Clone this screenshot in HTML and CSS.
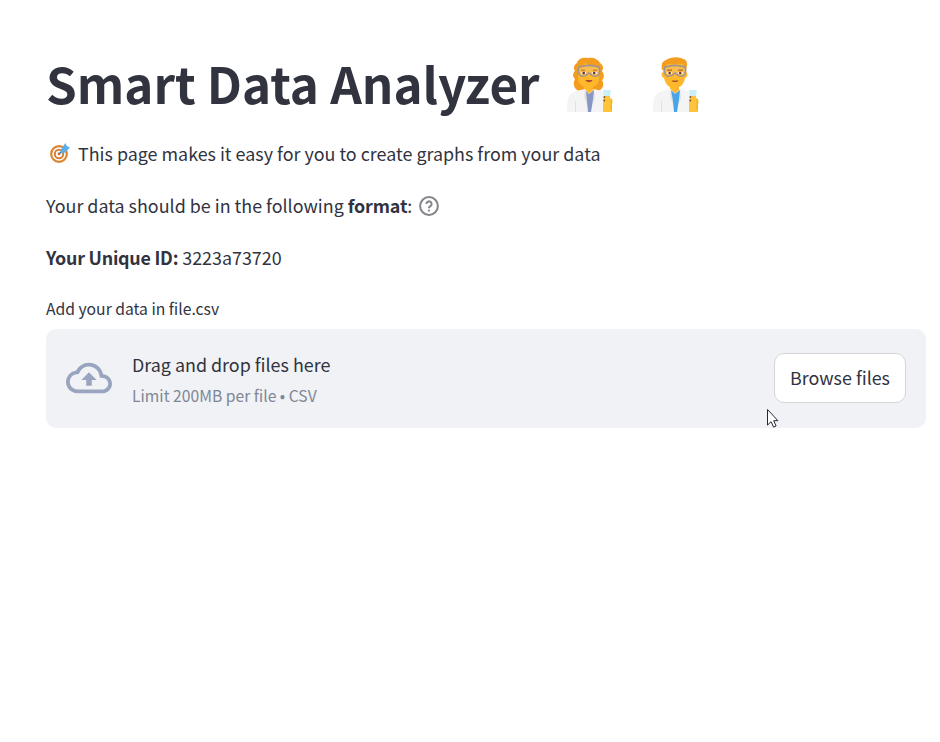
FILE: index.html
```
<!DOCTYPE html>
<html lang="en">
<head>
<meta charset="utf-8">
<title>Smart Data Analyzer</title>
<link rel="stylesheet" href="styles.css">
</head>
<body>
<main class="page">
  <h1 class="title">
    <span class="title-text">Smart Data Analyzer</span>
    <svg class="scientist" viewBox="0 0 46 56" aria-hidden="true">
      <path fill="#f39c1d" d="M21 1c-6-1-10 1-11 5-3 2-4 5-2 8-3 3-2 6 0 8-3 5 0 12 5 12h17c5 0 8-6 5-11 3-3 2-6 0-9 2-3 1-6-2-8C31 2 26 0 21 1z"/>
      <path fill="#ffb72b" d="M11 14c2-5 5-6 8-8 2 2 6 2 9 3 2 1 4 3 4 6v6c0 5-3 8-6 9v4l-4 3-5-3v-4c-4-2-6-5-6-9z"/>
      <path fill="#f4f4f5" d="M0 55c0-12 1-19 9-21l9-2 4 5 5-5 8 2c2 1 3 3 3 6v15z"/>
      <path fill="#e1e1e3" d="M8 44v11h1V44zM18 32l-1 7 5 15V38zm9 0-3 6-1 16 5-13z"/>
      <path fill="#8796c2" d="m19 34 3 3 5-4-1 9-2 13h-3l-1-11z"/>
      <path fill="#f4be62" fill-opacity=".65" stroke="#a19391" stroke-width="1.6" d="M12 10c6-2 14-2 20 0 1 3 1 8-2 9-4 1-6-1-8-3-2 2-4 4-8 3-3-1-3-6-2-9z"/>
      <path fill="#ffe9cf" d="M14 15h5v2h-5zm11 0h5v2h-5z"/>
      <circle cx="16.7" cy="16" r="1.3" fill="#57344a"/><circle cx="27.2" cy="16" r="1.3" fill="#57344a"/>
      <path fill="none" stroke="#b87326" d="M14 13.2h4m8 0h4"/>
      <path fill="#b24a34" d="M18.5 23h7c-1 3-6 3-7 0z"/>
      <path fill="#ffc439" d="M37 39h6v2c3 1 3 4 2 6v8h-9V43z"/>
      <path fill="#c9f0f8" d="M36 33h8l-1 6h-6z"/>
      <path fill="#f3b02c" d="M43.5 42H45v11h-1.5z"/>
      <circle cx="37.4" cy="40" r=".9" fill="#795033"/><circle cx="37.4" cy="43.5" r=".9" fill="#795033"/>
    </svg>
    <svg class="scientist" viewBox="0 0 46 56" aria-hidden="true">
      <path fill="#f39c1d" d="M9 13C8 8 9 4 13 3c6-4 14-3 17-1 4 0 5 5 3 11z"/>
      <path fill="#ffb72b" d="M11 12c1-4 3-5 6-5 5 1 9-1 13 0 2 2 2 5 3 8 2 1 2 5-1 6-1 5-3 8-6 9v4l-4 3-5-3v-4c-3-1-5-5-6-9-3-1-3-5-1-6z"/>
      <path fill="#f4f4f5" d="M0 55c0-12 1-19 9-21l9-2 4 5 5-5 8 2c2 1 3 3 3 6v15z"/>
      <path fill="#e1e1e3" d="M8 44v11h1V44zM18 32l-1 7 5 15V38zm9 0-3 6-1 16 5-13z"/>
      <path fill="#48a4e8" d="m18 33 4 4 5-4-1 9-2 13h-3l-1-11z"/>
      <path fill="#f4be62" fill-opacity=".65" stroke="#a19391" stroke-width="1.6" d="M12 10c6-2 14-2 20 0 1 3 1 8-2 9-4 1-6-1-8-3-2 2-4 4-8 3-3-1-3-6-2-9z"/>
      <path fill="#ffe9cf" d="M14 15h5v2h-5zm11 0h5v2h-5z"/>
      <circle cx="16.7" cy="16" r="1.3" fill="#674139"/><circle cx="27.2" cy="16" r="1.3" fill="#674139"/>
      <path fill="none" stroke="#b76922" stroke-width="1.3" d="M14 13.2h5m6 0h5"/>
      <path fill="#a95225" d="M18.5 23.5h7c-1 2-6 2-7 0z"/>
      <path fill="#ffc439" d="M37 39h6v2c3 1 3 4 2 6v8h-9V43z"/>
      <path fill="#c9f0f8" d="M36 33h8l-1 6h-6z"/>
      <path fill="#f3b02c" d="M43.5 42H45v11h-1.5z"/>
      <circle cx="37.4" cy="40" r=".9" fill="#795033"/><circle cx="37.4" cy="43.5" r=".9" fill="#795033"/>
    </svg>
  </h1>
  <p class="row intro">
    <svg class="target" viewBox="0 0 20 20" aria-hidden="true">
      <circle cx="9" cy="11" r="7.8" fill="#fff" stroke="#dc842f" stroke-width="2.2"/>
      <circle cx="9" cy="11" r="4.2" fill="#fff" stroke="#d77f34" stroke-width="2"/>
      <circle cx="9" cy="11" r="1.4" fill="#d77730"/>
      <path stroke="#357fb3" stroke-width="1.3" d="m9 11 5-5"/>
      <path fill="#5baee9" d="m10.5 7 3.5-5 1.5-2 1.3 3L20 4.5l-5 5-4 1z"/>
    </svg>
    <span>This page makes it easy for you to create graphs from your data</span>
  </p>
  <p class="row format"><span>Your data should be in the following <b>format</b>:</span>
    <svg class="help" viewBox="0 0 20 20" aria-hidden="true">
      <circle cx="10" cy="10" r="8.9"/>
      <path d="M7.4 8a2.6 2.6 0 1 1 4 2.2c-.9.6-1.5 1-1.5 2"/>
      <circle class="dot" cx="9.9" cy="14.6" r="1.1"/>
    </svg>
  </p>
  <p class="row uid"><span><b>Your Unique ID:</b> 3223a73720</span></p>
  <label class="label">Add your data in file.csv</label>
  <section class="uploader">
    <svg class="cloud" viewBox="0 0 24 24" aria-hidden="true"><path d="M19.35 10.04A7.49 7.49 0 0 0 12 4C9.11 4 6.6 5.64 5.35 8.04A5.994 5.994 0 0 0 0 14c0 3.31 2.69 6 6 6h13c2.76 0 5-2.24 5-5 0-2.64-2.05-4.78-4.65-4.96zM19 18H6c-2.21 0-4-1.79-4-4 0-2.05 1.53-3.76 3.56-3.97l1.07-.11.5-.95A5.469 5.469 0 0 1 12 6c2.62 0 4.88 1.86 5.39 4.43l.3 1.5 1.53.11A2.98 2.98 0 0 1 22 15c0 1.65-1.35 3-3 3zM8 13h2.55v3h2.9v-3H16l-4-4z"/></svg>
    <div class="instructions">
      <span class="drag">Drag and drop files here</span>
      <span class="limit">Limit 200MB per file • CSV</span>
    </div>
    <button class="browse" type="button">Browse files</button>
    <svg class="cursor" viewBox="0 0 13 20" aria-hidden="true"><path d="M1.5 1.5v15.6l3.6-3.4 2.5 5.4 2.5-1.1-2.4-5.3h4.2z"/></svg>
  </section>
</main>
</body>
</html>
```
FILE: styles.css
```
* { box-sizing: border-box; }
body {
  margin: 0;
  background: #fff;
  color: #31333f;
  font-family: "Noto Sans CJK JP", "Noto Sans", sans-serif;
  font-size: 17.9px;
  line-height: 32px;
}
svg { display: block; flex: none; }
.page { padding: 50px 14px 0 46px; }
.title {
  display: flex;
  height: 66px;
  margin: 0 0 21px;
  font-size: 49.3px;
  line-height: 66px;
  font-weight: 700;
  white-space: nowrap;
}
.title-text { width: 521px; }
.scientist { width: 46px; height: 56px; margin-top: 7px; }
.scientist + .scientist { margin-left: 40px; }
.row {
  display: flex;
  align-items: center;
  height: 32px;
  margin: 0 0 20px;
  white-space: nowrap;
}
.row b { font-weight: 700; letter-spacing: -0.25px; }
.target { width: 20px; height: 20px; margin: 0 8px 0 4px; }
.format { gap: 7px; }
.format b { letter-spacing: -0.15px; }
.help { width: 20px; height: 20px; margin-top: 1px; fill: none; stroke: #83858c; stroke-width: 2; }
.help .dot { fill: #83858c; stroke: none; }
.label {
  display: block;
  height: 24px;
  margin: 24px 0 8px;
  font-size: 15.7px;
  line-height: 24px;
}
.uploader {
  position: relative;
  display: flex;
  align-items: center;
  height: 99px;
  padding: 0 20px 1px;
  border-radius: 10px;
  background: #f0f2f6;
}
.cloud { width: 46px; height: 46px; margin-right: 20px; fill: #99a5bf; }
.instructions { display: flex; flex: 1; flex-direction: column; gap: 4px; padding-top: 1px; }
.drag { line-height: 30px; }
.limit { font-size: 15.7px; line-height: 25px; color: #808695; }
.browse {
  width: 132px;
  height: 50px;
  padding: 0 0 2px;
  border: 1px solid #d6d6da;
  border-radius: 10px;
  background: #fff;
  color: inherit;
  font: inherit;
}
.cursor { position: absolute; left: 720px; top: 79px; width: 13px; height: 20px; fill: #fff; stroke: #252733; stroke-width: 1; }
```
